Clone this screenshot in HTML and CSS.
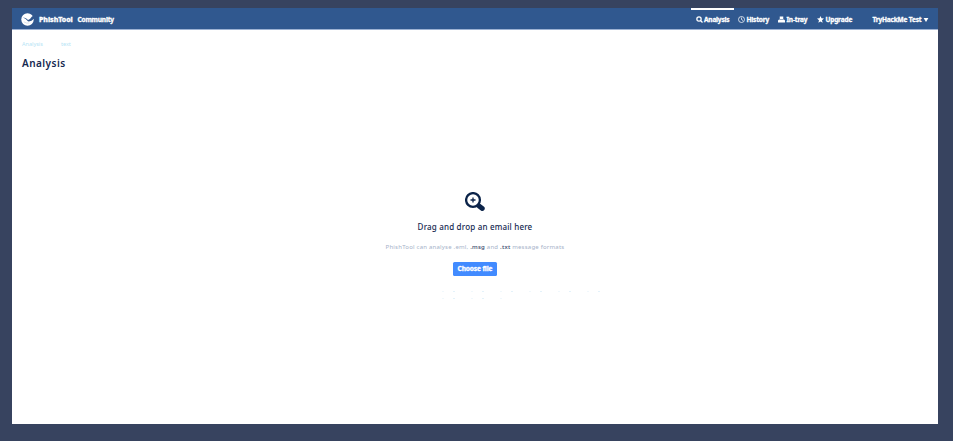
FILE: index.html
```html
<!DOCTYPE html>
<html lang="en"><head><meta charset="utf-8"><title>PhishTool</title><link rel="stylesheet" href="styles.css"></head>
<body>
<div class="app">
<header class="bar">
<svg class="logo" viewBox="0 0 14 14"><circle cx="7" cy="7" r="6.7" fill="#fff"/><path d="M1.800 4.500Q6 5.200 7.600 7.500Q10 6.800 12 3.500L14 3.500V6.200Q11 9.500 7.500 9Q5.500 6 1.800 4.500z" fill="#30588f"/><path d="M3 9.500Q6 11.500 9 10.800" fill="none" stroke="#c3d0e3" stroke-width=".7"/></svg>
<span class="name">PhishTool</span><span class="edition">Community</span>
<nav class="nav">
<a class="item active analysis"><svg class="icon" viewBox="0 0 14 14"><circle cx="6" cy="6" r="4.3"/><path d="M9 9l4 4"/></svg><span>Analysis</span></a>
<a class="item history"><svg class="icon thin" viewBox="0 0 14 14"><circle cx="7" cy="7" r="6"/><path d="M7 3v4l3 2"/></svg><span>History</span></a>
<a class="item tray"><svg class="icon fill" viewBox="0 0 14 14"><path d="M3.500 1h7v5h-7zM2 7h10l2 2v4H0V9z"/></svg><span>In-tray</span></a>
<a class="item upgrade"><svg class="icon fill" viewBox="0 0 14 14"><path d="M7 0l2 4.700 5 .5-4 3.400 1.300 5.100L7 11l-4.300 2.700L4 8.600 0 5.200l5-.5z"/></svg><span>Upgrade</span></a>
<a class="item user"><span>TryHackMe Test</span><svg class="caret" viewBox="0 0 6 5"><path d="M0 0h6L3 5z"/></svg></a>
</nav>
</header>
<div class="crumbs"><span>Analysis</span><span>text</span></div>
<h1>Analysis</h1>
<main class="drop">
<svg class="glass" viewBox="0 0 20 20"><circle cx="8" cy="8" r="6.900"/><path class="handle" d="M14 14l3.300 2.500"/><path class="plus" d="M5.500 8h5M8 5.500v5"/></svg>
<h2>Drag and drop an email here</h2>
<p class="formats">PhishTool can analyse .eml, <b>.msg</b> and <b>.txt</b> message formats</p>
<button>Choose file</button>
<div class="marks"><div class="line"></div><div class="line short"></div></div>
</main>
</div>
</body></html>
```
FILE: styles.css
```css
*{box-sizing:border-box}
body{margin:0;width:953px;height:441px;overflow:hidden;background:#37435f;padding:8px 15px 17px 12px;font-family:"Noto Sans","Open Sans",sans-serif;color:#142850}
.app{height:416px;background:#fff}
.bar{height:22px;background:#30588f;border-bottom:1px solid #9db2d3;display:flex;align-items:center;padding-left:9px;color:#fff}
.logo{width:13px;height:13px;margin-top:2px}
.name,.edition{font-size:7px;line-height:10px;font-weight:800;margin-top:3px;white-space:nowrap;-webkit-text-stroke:.3px #fff}
.name{width:34px;margin-left:5px;letter-spacing:-.02px}
.edition{font-size:6.500px;font-weight:700;margin-left:4.500px;letter-spacing:-.16px}
.nav{margin-left:auto;height:21px;display:flex;align-items:stretch}
.item{display:flex;align-items:center;gap:1.500px;font-weight:700;font-size:6.500px;letter-spacing:-.17px;white-space:nowrap;border-top:2px solid transparent;-webkit-text-stroke:.3px #fff}
.active{border-color:#fff}
.analysis{width:43px;padding-left:4.500px}
.history{width:40px;padding-left:4px}
.tray{width:39px;padding-left:4px}
.upgrade{width:55px;padding-left:4px}
.user{width:70px;padding-left:4.500px}
.icon{width:7px;height:7px;flex:none;fill:none;stroke:#fff;stroke-width:2.500}
.thin{stroke-width:1.500}
.fill{fill:#fff;stroke:none}
.caret{width:6px;height:4px;fill:#fff;flex:none}
.crumbs{height:20px;padding:10px 0 0 10px;display:flex;gap:18px;font-size:5.500px;line-height:9px;color:#b5e4f5}
h1{font-size:10px;line-height:14px;font-weight:600;letter-spacing:.45px;margin:6px 0 0 10px}
.drop{margin-top:122px;display:flex;flex-direction:column;align-items:center}
.glass{width:20px;height:20px;fill:none;stroke:#0b2349;stroke-width:2.300}
.handle{stroke-width:4.800;stroke-linecap:round}
.plus{stroke-width:1.300}
h2{font-size:8px;line-height:12px;font-weight:500;letter-spacing:.19px;margin:9px 0 0}
.formats{font-size:6px;line-height:9px;letter-spacing:.22px;margin:10px 0 0;color:#a6b2c9;white-space:nowrap}
.formats b{font-weight:500;color:#34466b}
button{width:44px;height:14px;margin:10px 0 0;padding:0;border:0;border-radius:1.500px;background:#428bff;color:#fff;font:700 6.500px/14px "Noto Sans",sans-serif;letter-spacing:-.08px;-webkit-text-stroke:.3px #fff}
.marks{width:228px;margin:15px 0 0 162px}
.marks .line{width:174px;height:1px;background:repeating-linear-gradient(90deg,#f1f8fc 0 2px,#fff 2px 11px,#e4f2fa 11px 13px,#fff 13px 29px)}
.marks .line.short{width:62px;margin:6px 0 0 0}
```
